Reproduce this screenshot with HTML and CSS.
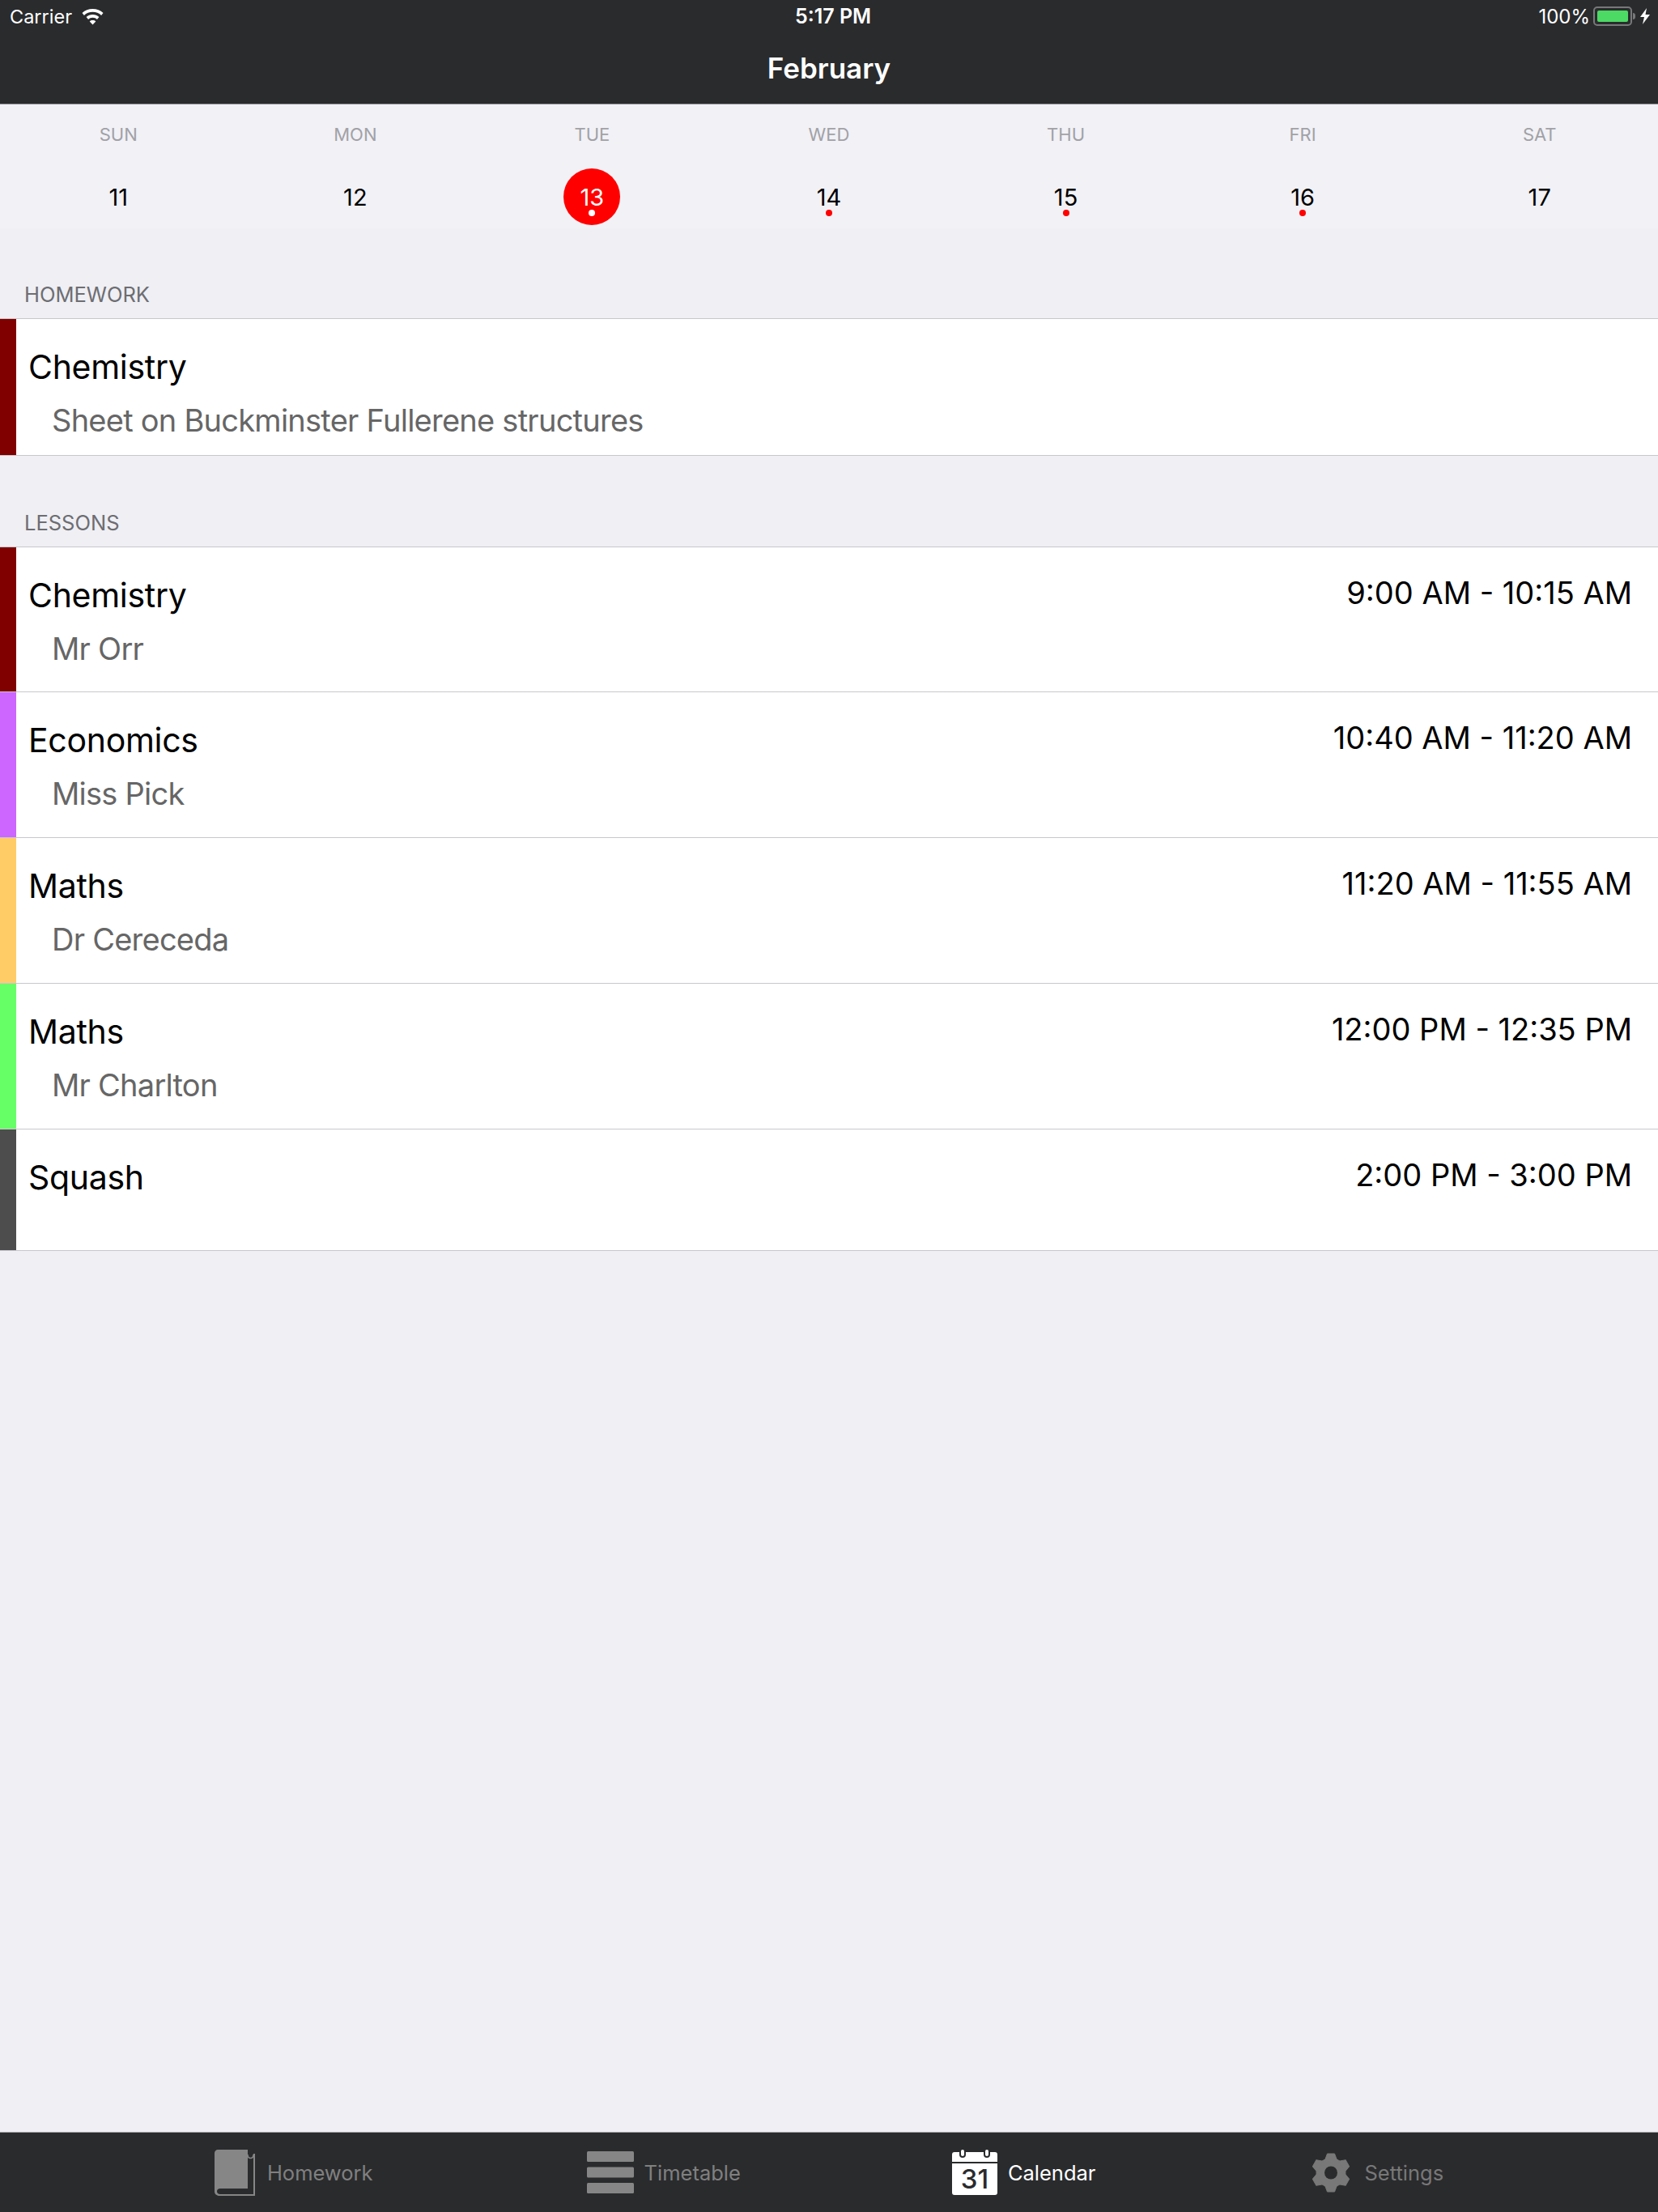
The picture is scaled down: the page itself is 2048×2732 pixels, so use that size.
FILE: index.html
```html
<!DOCTYPE html>
<html>
<head>
    <meta charset="UTF-8">
    <meta name="viewport" content="width=device-width, initial-scale=1.0">
    <title>Calendar</title>
    <link rel="stylesheet" href="styles.css">
</head>
<body>
    <div class="page">
        <header class="topbar">
            <div class="status">
                <div class="status-left">
                    <span>Carrier</span>
                    <svg class="wifi" viewBox="0 0 28 21"><path fill="#fff" d="M14 1C9 1 4.500 2.800 1 6l2.400 2.900C6.200 6.300 10 4.800 14 4.800s7.800 1.500 10.600 4.100L27 6C23.500 2.800 19 1 14 1zM14 8c-3 0-5.800 1.100-7.900 3l2.500 2.900c1.400-1.300 3.300-2.100 5.400-2.100s4 .8 5.400 2.100l2.500-2.900C19.800 9.100 17 8 14 8zM14 15c-1.500 0-2.800.5-3.800 1.400l3.800 4.100 3.800-4.100C16.800 15.500 15.500 15 14 15z"/></svg>
                </div>
                <div class="status-time">5:17 PM</div>
                <div class="status-right">
                    <span>100%</span>
                    <div class="battery"><div class="battery-fill"></div></div>
                    <div class="battery-tip"></div>
                    <svg class="bolt" viewBox="0 0 12 20"><path fill="#fff" d="M8 0 0 11h5l-2 9 9-12H6.500z"/></svg>
                </div>
            </div>
            <h1 class="title">February</h1>
        </header>

        <section class="week">
            <div class="day"><div class="day-name">SUN</div><div class="day-num">11</div></div>
            <div class="day"><div class="day-name">MON</div><div class="day-num">12</div></div>
            <div class="day"><div class="day-name">TUE</div><div class="day-num today">13<span class="dot"></span></div></div>
            <div class="day"><div class="day-name">WED</div><div class="day-num">14<span class="dot"></span></div></div>
            <div class="day"><div class="day-name">THU</div><div class="day-num">15<span class="dot"></span></div></div>
            <div class="day"><div class="day-name">FRI</div><div class="day-num">16<span class="dot"></span></div></div>
            <div class="day"><div class="day-name">SAT</div><div class="day-num">17</div></div>
        </section>

        <main class="content">
            <h2 class="section-label">HOMEWORK</h2>
            <div class="list">
                <div class="row row-homework">
                    <div class="stripe red"></div>
                    <div class="row-text">
                        <div class="row-title">Chemistry</div>
                        <div class="row-sub">Sheet on Buckminster Fullerene structures</div>
                    </div>
                </div>
            </div>

            <h2 class="section-label">LESSONS</h2>
            <div class="list">
                <div class="row row-first">
                    <div class="stripe red"></div>
                    <div class="row-text">
                        <div class="row-title">Chemistry</div>
                        <div class="row-sub">Mr Orr</div>
                    </div>
                    <div class="row-time">9:00 AM - 10:15 AM</div>
                </div>
                <div class="row">
                    <div class="stripe purple"></div>
                    <div class="row-text">
                        <div class="row-title">Economics</div>
                        <div class="row-sub">Miss Pick</div>
                    </div>
                    <div class="row-time">10:40 AM - 11:20 AM</div>
                </div>
                <div class="row">
                    <div class="stripe orange"></div>
                    <div class="row-text">
                        <div class="row-title">Maths</div>
                        <div class="row-sub">Dr Cereceda</div>
                    </div>
                    <div class="row-time">11:20 AM - 11:55 AM</div>
                </div>
                <div class="row">
                    <div class="stripe green"></div>
                    <div class="row-text">
                        <div class="row-title">Maths</div>
                        <div class="row-sub">Mr Charlton</div>
                    </div>
                    <div class="row-time">12:00 PM - 12:35 PM</div>
                </div>
                <div class="row row-short">
                    <div class="stripe grey"></div>
                    <div class="row-text">
                        <div class="row-title">Squash</div>
                    </div>
                    <div class="row-time">2:00 PM - 3:00 PM</div>
                </div>
            </div>
        </main>

        <nav class="tabbar">
            <div class="tab tab-book">
                <svg class="tab-icon" width="50" height="57" viewBox="0 0 50 57">
                    <path fill="#868686" d="M4 0H41V48H7C4.500 48 3 49.500 3 51.500S4.500 55 7 55H48V5h2V57H6C2.500 57 0 54.500 0 52V4C0 2 2 0 4 0z"/>
                    <path fill="none" stroke="#868686" stroke-width="1.500" d="M41 6c0 3 1.500 4.500 3.500 4.500S48 9 48 6"/>
                </svg>
                <span>Homework</span>
            </div>
            <div class="tab">
                <svg class="tab-icon" width="58" height="52" viewBox="0 0 58 52"><rect width="58" height="13" rx="1.500" fill="#868686"/><rect y="19.500" width="58" height="13" rx="1.500" fill="#868686"/><rect y="39" width="58" height="13" rx="1.500" fill="#868686"/></svg>
                <span>Timetable</span>
            </div>
            <div class="tab tab-active">
                <svg class="tab-icon" width="56" height="56" viewBox="0 0 56 56">
                    <path fill="#fff" d="M3 3h50a3 3 0 0 1 3 3v9H0V6a3 3 0 0 1 3-3zM0 17h56v36a3 3 0 0 1-3 3H3a3 3 0 0 1-3-3z"/>
                    <rect x="9" y="-2" width="8" height="12" rx="4" fill="#2A2B2D"/>
                    <rect x="39" y="-2" width="8" height="12" rx="4" fill="#2A2B2D"/>
                    <rect x="11" width="4" height="8" rx="2" fill="#fff"/>
                    <rect x="41" width="4" height="8" rx="2" fill="#fff"/>
                    <text x="28" y="48" text-anchor="middle" class="cal-num">31</text>
                </svg>
                <span>Calendar</span>
            </div>
            <div class="tab tab-settings">
                <svg class="tab-icon" width="48" height="49" viewBox="0 0 48 49">
                    <g fill="#787878" stroke="#787878" stroke-linejoin="round">
                        <circle cx="24" cy="24.500" r="18"/>
                        <path d="M16.500 9 19.500 1h9l3 8zM16.500 40l3 8h9l3-8z"/>
                        <path transform="rotate(60 24 24.500)" d="M16.500 9 19.500 1h9l3 8zM16.500 40l3 8h9l3-8z"/>
                        <path transform="rotate(120 24 24.500)" d="M16.500 9 19.500 1h9l3 8zM16.500 40l3 8h9l3-8z"/>
                    </g>
                    <circle cx="24" cy="24.500" r="8" fill="#2A2B2D"/>
                </svg>
                <span>Settings</span>
            </div>
        </nav>
    </div>
</body>
</html>
```

FILE: styles.css
```css
* {
    box-sizing: border-box;
}
body {
    margin: 0;
    background-color: #EFEFF4;
    font-family: 'Inter', 'Liberation Sans', sans-serif;
    color: #000;
}
.page {
    width: 2048px;
    height: 2732px;
    display: flex;
    flex-direction: column;
    overflow: hidden;
}

/* top bar */
.topbar {
    height: 129px;
    background-color: #2A2B2D;
    border-bottom: 1px solid #8E8E90;
    color: #fff;
}
.status {
    height: 40px;
    padding: 0 10px 0 12px;
    display: flex;
    align-items: center;
    justify-content: space-between;
    position: relative;
    font-size: 24px;
}
.status-left,
.status-right {
    display: flex;
    align-items: center;
}
.status-left {
    font-size: 23.5px;
}
.wifi {
    width: 29px;
    height: 21px;
    margin-left: 11px;
}
.status-time {
    position: absolute;
    left: 982px;
    font-size: 25px;
    font-weight: 600;
}
.battery {
    width: 48px;
    height: 24px;
    margin-left: 4px;
    padding: 3px;
    border: 2px solid #77787A;
    border-radius: 5px;
}
.battery-fill {
    height: 100%;
    background-color: #4CD964;
    border-radius: 2px;
}
.battery-tip {
    width: 3px;
    height: 8px;
    margin-left: 1px;
    background-color: #77787A;
    border-radius: 0 3px 3px 0;
}
.bolt {
    width: 12px;
    height: 20px;
    margin-left: 6px;
}
.title {
    margin: 0;
    text-align: center;
    font-size: 35px;
    font-weight: 600;
    line-height: 88px;
}

/* week strip */
.week {
    height: 153px;
    background-color: #F1F1F6;
    display: grid;
    grid-template-columns: repeat(7, 1fr);
}
.day {
    display: flex;
    flex-direction: column;
    align-items: center;
}
.day-name {
    margin-top: 22px;
    font-size: 22px;
    line-height: 30px;
    color: #A1A1A6;
}
.day-num {
    margin-top: 27px;
    width: 70px;
    height: 70px;
    border-radius: 50%;
    position: relative;
    font-size: 29px;
    line-height: 72px;
    text-align: center;
}
.today {
    background-color: #FF0000;
    color: #fff;
}
.dot {
    position: absolute;
    left: 31px;
    top: 51px;
    width: 8px;
    height: 8px;
    border-radius: 50%;
    background-color: #FF0000;
}
.today .dot {
    background-color: #fff;
}

/* lists */
.content {
    flex: 1;
}
.section-label {
    margin: 0;
    padding: 57px 0 0 30px;
    height: 111px;
    font-size: 25.5px;
    font-weight: 400;
    line-height: 50px;
    color: #6D6D72;
}
.list + .section-label {
    height: 112px;
    padding-top: 58px;
}
.list {
    background-color: #fff;
    border-top: 1px solid #C8C7CC;
}
.row {
    height: 180px;
    display: flex;
    border-bottom: 1px solid #C8C7CC;
}
.row-homework {
    height: 169px;
}
.row-first {
    height: 179px;
}
.row-short {
    height: 150px;
}
.stripe {
    width: 20px;
    flex-shrink: 0;
}
.red { background-color: #800000; }
.purple { background-color: #CC66FF; }
.orange { background-color: #FFCC66; }
.green { background-color: #66FF66; }
.grey { background-color: #4D4D4D; }
.row-text {
    flex: 1;
    padding: 34px 0 0 15px;
}
.row-title {
    font-size: 41px;
    line-height: 50px;
    letter-spacing: -0.3px;
}
.row-sub {
    margin: 16px 0 0 29px;
    font-size: 38px;
    line-height: 50px;
    letter-spacing: -0.75px;
    color: #666;
}
.row-time {
    padding: 31px 32px 0 0;
    font-size: 38px;
    line-height: 50px;
}

/* bottom tabs */
.tabbar {
    height: 99px;
    background-color: #2A2B2D;
    border-top: 1px solid #A0A0A2;
    display: flex;
    align-items: center;
    justify-content: center;
    gap: 264px;
    font-size: 25.5px;
    color: #808080;
}
.tab {
    display: flex;
    align-items: center;
    gap: 13px;
}
.tab-book {
    gap: 15px;
}
.tab-active {
    color: #fff;
    margin-left: -3px;
}
.tab-settings {
    color: #787878;
    margin-left: 3px;
    gap: 17px;
}
.cal-num {
    font-size: 33px;
    font-weight: 500;
    fill: #2A2B2D;
    font-family: 'Inter', 'Liberation Sans', sans-serif;
}
```
